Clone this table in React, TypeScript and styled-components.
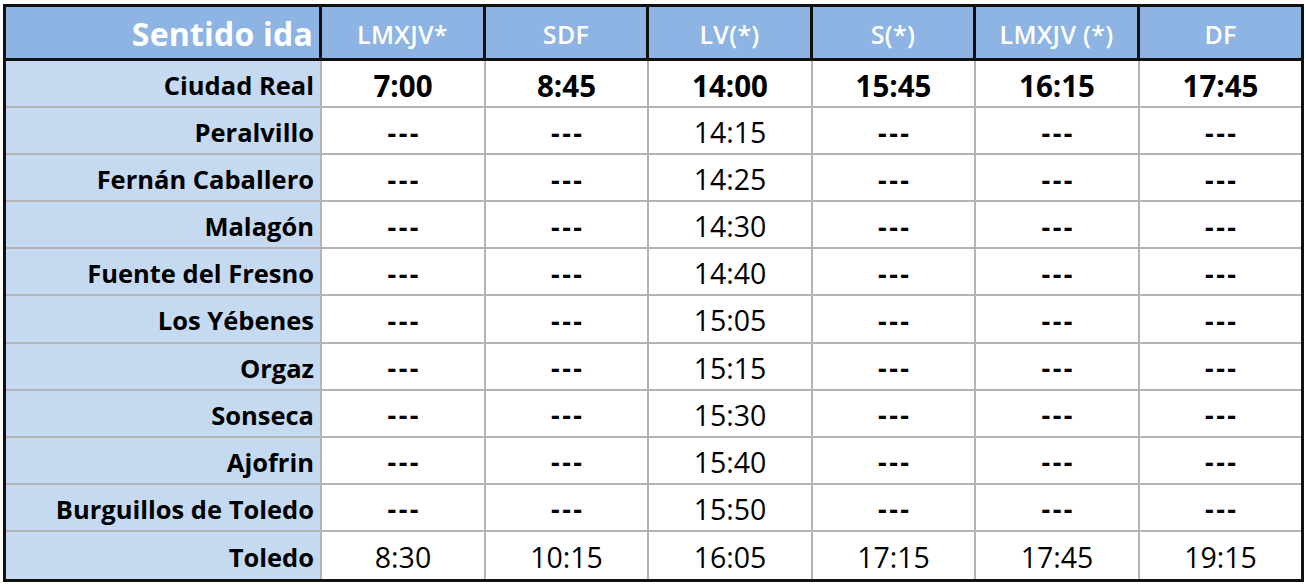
import React from "react";
import styled, { createGlobalStyle } from "styled-components";

const GlobalStyle = createGlobalStyle`
  html, body { margin: 0; padding: 0; background: #ffffff; }
  body { font-family: "Open Sans", Lato, sans-serif; }
`;

const Frame = styled.div`
  margin: 4px 0 0 3px;
  width: 1301px;
  height: 578px;
  box-sizing: border-box;
  border: 3px solid #111111;
  display: grid;
  grid-template-columns: 316px 164px 163px 164px 163px 164px 161px;
  grid-template-rows: 54px repeat(11, 1fr);
  font-family: "Open Sans", Lato, sans-serif;
  font-variant-ligatures: none;
`;

const HeadCell = styled.div<{ $last?: boolean; $title?: boolean }>`
  background: #8db4e2;
  color: #ffffff;
  border-bottom: 3px solid #111111;
  border-right: ${(p) => (p.$last ? "none" : "3px solid #111111")};
  display: flex;
  align-items: center;
  justify-content: ${(p) => (p.$title ? "flex-end" : "center")};
  padding: ${(p) => (p.$title ? "2px 6px 0 0" : "2px 0 0 0")};
  font-size: ${(p) => (p.$title ? "32px" : "25px")};
  font-weight: ${(p) => (p.$title ? 700 : 600)};
  letter-spacing: ${(p) => (p.$title ? "0.2px" : "0.3px")};
  white-space: nowrap;
`;

const StationCell = styled.div<{ $lastRow?: boolean }>`
  background: #c5d9f1;
  color: #000000;
  border-right: 2px solid #b4b4b4;
  border-bottom: ${(p) => (p.$lastRow ? "none" : "2px solid #b4b4b4")};
  display: flex;
  align-items: center;
  justify-content: flex-end;
  padding: 3px 6px 0 0;
  font-size: 25.5px;
  font-weight: 700;
  white-space: nowrap;
`;

const TimeCell = styled.div<{ $bold?: boolean; $big?: boolean; $lastRow?: boolean; $lastCol?: boolean }>`
  background: #ffffff;
  color: #000000;
  border-right: ${(p) => (p.$lastCol ? "none" : "2px solid #b4b4b4")};
  border-bottom: ${(p) => (p.$lastRow ? "none" : "2px solid #b4b4b4")};
  display: flex;
  align-items: center;
  justify-content: center;
  padding-top: 3px;
  font-size: ${(p) => (p.$big ? "29.5px" : "28.5px")};
  font-weight: ${(p) => (p.$bold ? 700 : 400)};
  white-space: nowrap;
`;

const Dash = styled.span`
  font-size: 27px;
  font-weight: 700;
  letter-spacing: 2.5px;
  margin-right: -2.5px;
`;

const headers = ["LMXJV*", "SDF", "LV(*)", "S(*)", "LMXJV (*)", "DF"];

const D = "---";
const rows: { station: string; times: string[]; kind: "first" | "mid" | "last" }[] = [
  { station: "Ciudad Real", times: ["7:00", "8:45", "14:00", "15:45", "16:15", "17:45"], kind: "first" },
  { station: "Peralvillo", times: [D, D, "14:15", D, D, D], kind: "mid" },
  { station: "Fernán Caballero", times: [D, D, "14:25", D, D, D], kind: "mid" },
  { station: "Malagón", times: [D, D, "14:30", D, D, D], kind: "mid" },
  { station: "Fuente del Fresno", times: [D, D, "14:40", D, D, D], kind: "mid" },
  { station: "Los Yébenes ", times: [D, D, "15:05", D, D, D], kind: "mid" },
  { station: "Orgaz", times: [D, D, "15:15", D, D, D], kind: "mid" },
  { station: "Sonseca", times: [D, D, "15:30", D, D, D], kind: "mid" },
  { station: "Ajofrin", times: [D, D, "15:40", D, D, D], kind: "mid" },
  { station: "Burguillos de Toledo", times: [D, D, "15:50", D, D, D], kind: "mid" },
  { station: "Toledo", times: ["8:30", "10:15", "16:05", "17:15", "17:45", "19:15"], kind: "last" },
];

export default function App() {
  return (
    <>
      <GlobalStyle />
      <Frame>
        <HeadCell $title>Sentido ida</HeadCell>
        {headers.map((h, i) => (
          <HeadCell key={h} $last={i === headers.length - 1}>
            {h}
          </HeadCell>
        ))}
        {rows.map((r, ri) => {
          const lastRow = ri === rows.length - 1;
          return (
            <React.Fragment key={r.station}>
              <StationCell $lastRow={lastRow}>{r.station}</StationCell>
              {r.times.map((t, ci) => (
                <TimeCell
                  key={ci}
                  $lastRow={lastRow}
                  $lastCol={ci === r.times.length - 1}
                  $bold={r.kind === "first"}
                  $big={r.kind === "first"}
                >
                  {t === D ? <Dash>{t}</Dash> : t}
                </TimeCell>
              ))}
            </React.Fragment>
          );
        })}
      </Frame>
    </>
  );
}
